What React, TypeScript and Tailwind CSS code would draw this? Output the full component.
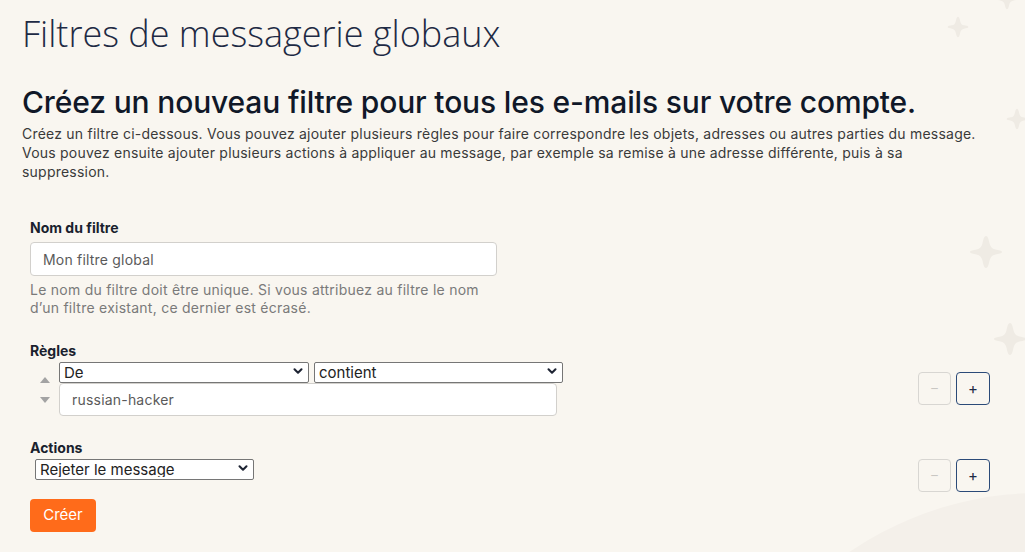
import { ChevronDown } from "lucide-react";

const font = { fontFamily: "Inter, 'Noto Sans', sans-serif" };

function Sparkle({ className }: { className: string }) {
  return (
    <svg viewBox="0 0 32 32" className={`absolute fill-[#efebe4] ${className}`}>
      <path d="M16 1c2 0 2.6 4 3.4 7.2.8 3 2.3 4.5 5.4 5.4C28 14.4 31 14.4 31 16s-3 1.6-6.2 2.4c-3.1.9-4.6 2.4-5.4 5.4C18.6 27 18 31 16 31s-2.6-4-3.4-7.2c-.8-3-2.3-4.5-5.4-5.4C4 17.6 1 17.6 1 16s3-1.6 6.2-2.4c3.1-.9 4.6-2.4 5.4-5.4C13.4 5 14 1 16 1z" />
    </svg>
  );
}

function Select({ value, width }: { value: string; width: string }) {
  return (
    <div className={`relative ${width} h-[21px]`}>
      <select
        defaultValue={value}
        className="w-full h-full appearance-none bg-white border border-[#767676] rounded-[2px] pl-[4px] text-[15px] leading-none text-[#222] outline-none"
        style={font}
      >
        <option>{value}</option>
      </select>
      <ChevronDown
        size={14}
        strokeWidth={3.5}
        className="absolute right-[4px] top-[4px] text-[#1e2433] pointer-events-none"
      />
    </div>
  );
}

function PlusMinus() {
  return (
    <div className="flex gap-[5px]">
      <button className="w-[33px] h-[33px] rounded-[4px] border border-[#d8d6d2] text-[#c9c7c3] text-[13px] leading-none" style={font}>
        –
      </button>
      <button className="w-[34px] h-[33px] rounded-[4px] border border-[#2b4a78] text-[#1e2a44] text-[15px] leading-none" style={font}>
        +
      </button>
    </div>
  );
}

export default function App() {
  return (
    <div className="relative w-[1025px] h-[552px] overflow-hidden bg-[#f9f6f0]" style={font}>
      {/* background decorations */}
      <div className="absolute left-[703px] top-[493px] w-[674px] h-[674px] rounded-full bg-[#f4f0ea]" />
      <Sparkle className="left-[947px] top-[16px] w-[22px] h-[22px]" />
      <Sparkle className="left-[996px] top-[-12px] w-[22px] h-[22px]" />
      <Sparkle className="left-[1006px] top-[108px] w-[22px] h-[22px]" />
      <Sparkle className="left-[969px] top-[235px] w-[34px] h-[34px]" />
      <Sparkle className="left-[993px] top-[322px] w-[34px] h-[34px]" />

      <div className="relative px-[22px] pt-[10px]">
        <h1
          className="text-[36px] font-light text-[#1e2a44] leading-[48px]"
          style={{ fontFamily: "'Open Sans', sans-serif" }}
        >
          Filtres de messagerie globaux
        </h1>

        <h2 className="mt-[25px] text-[30px] font-medium tracking-[-0.15px] text-[#101828] leading-[38px]">
          Créez un nouveau filtre pour tous les e-mails sur votre compte.
        </h2>
        <p className="mt-[3px] text-[14px] leading-[19px] text-[#3a3a3a] tracking-[0.22px] whitespace-nowrap">
          Créez un filtre ci-dessous. Vous pouvez ajouter plusieurs règles pour faire correspondre les objets, adresses ou autres parties du message.
          <br />
          Vous pouvez ensuite ajouter plusieurs actions à appliquer au message, par exemple sa remise à une adresse différente, puis à sa
          <br />
          suppression.
        </p>

        <div className="pl-[8px] pr-[13px] mt-[37px]">
          <label className="block text-[14px] font-bold text-[#1a1f2e] leading-[20px]">Nom du filtre</label>
          <input
            defaultValue="Mon filtre global"
            className="mt-[4px] w-[467px] h-[34px] bg-white border border-[#d2d0cc] rounded-[4px] px-[12px] text-[14px] text-[#5a5a5a] tracking-[0.2px] outline-none"
          />
          <p className="mt-[5px] text-[14px] leading-[18px] text-[#7a7a7a] tracking-[0.25px] whitespace-nowrap">
            Le nom du filtre doit être unique. Si vous attribuez au filtre le nom
            <br />
            d’un filtre existant, ce dernier est écrasé.
          </p>

          <div className="mt-[24px] text-[14px] font-bold text-[#1a1f2e] leading-[20px]">Règles</div>
          <div className="flex items-start justify-between">
            <div className="flex items-center -mt-[1px]">
              <div className="flex flex-col items-center w-[29px] gap-[14px] pt-[3px] text-[#a3a3a3]">
                <svg width="10" height="6" viewBox="0 0 10 6"><path d="M0 6L5 0l5 6z" fill="currentColor" /></svg>
                <svg width="10" height="6" viewBox="0 0 10 6"><path d="M0 0h10L5 6z" fill="currentColor" /></svg>
              </div>
              <div>
                <div className="flex gap-[5px]">
                  <Select value="De" width="w-[250px]" />
                  <Select value="contient" width="w-[249px]" />
                </div>
                <input
                  defaultValue="russian-hacker"
                  className="mt-[2px] w-[498px] h-[33px] bg-white border border-[#d2d0cc] rounded-[4px] px-[12px] text-[14px] text-[#5a5a5a] tracking-[0.2px] outline-none"
                />
              </div>
            </div>
            <div className="mt-[11px]">
              <PlusMinus />
            </div>
          </div>

          <div className="mt-[22px] text-[14px] font-bold text-[#1a1f2e] leading-[20px]">Actions</div>
          <div className="flex items-start justify-between">
            <div className="pl-[5px] -mt-[1px]">
              <Select value="Rejeter le message" width="w-[219px]" />
            </div>
            <div className="mt-[1px]">
              <PlusMinus />
            </div>
          </div>

          <button className="mt-[7px] block w-[66px] h-[33px] rounded-[4px] bg-[#ff6b1a] text-white text-[15px]">
            Créer
          </button>
        </div>
      </div>
    </div>
  );
}
